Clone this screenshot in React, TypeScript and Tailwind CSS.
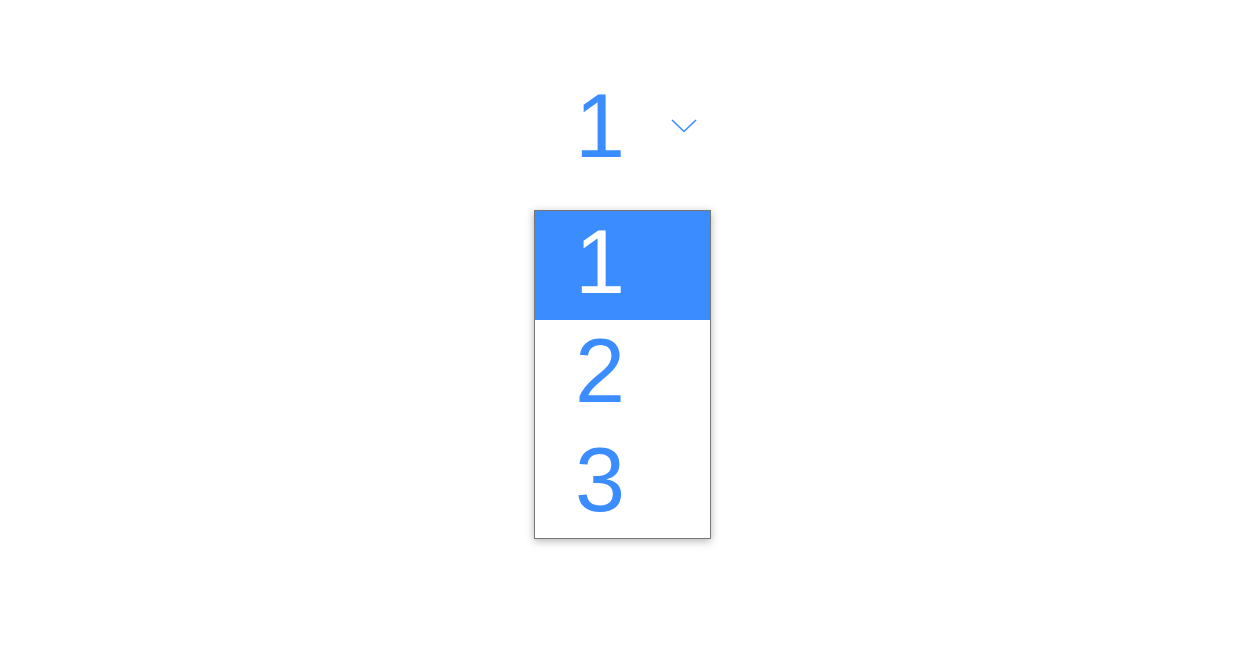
import React, { useState } from 'react';

const options = ['1', '2', '3'];

export default function App() {
  const [selected, setSelected] = useState('1');

  return (
    <div className="min-h-screen w-full bg-white flex justify-center pt-[71px] font-['Liberation_Sans',Arial,sans-serif]">
      <div className="w-[177px] ml-[-5px]">
        {/* トリガー */}
        <button
          type="button"
          className="w-full h-[110px] flex items-center justify-between pl-[41px] pr-[14px] text-[#3b8dff]"
        >
          <span className="text-[90px] leading-none">{selected}</span>
          <svg width="26" height="14" viewBox="0 0 26 14" fill="none" stroke="currentColor" strokeWidth="1.6">
            <polyline points="1,1 13,12.5 25,1" />
          </svg>
        </button>

        {/* オプション一覧 */}
        <ul className="mt-[29px] border border-[#777777] bg-white shadow-[0_2px_8px_rgba(0,0,0,0.3)]">
          {options.map((opt) => (
            <li
              key={opt}
              onClick={() => setSelected(opt)}
              className={
                opt === selected
                  ? 'h-[109px] flex items-center pl-[40px] pb-[8px] bg-[#3b8dff] text-white'
                  : 'h-[109px] flex items-center pl-[40px] pb-[8px] bg-white text-[#3b8dff]'
              }
            >
              <span className="text-[90px] leading-none">{opt}</span>
            </li>
          ))}
        </ul>
      </div>
    </div>
  );
}
